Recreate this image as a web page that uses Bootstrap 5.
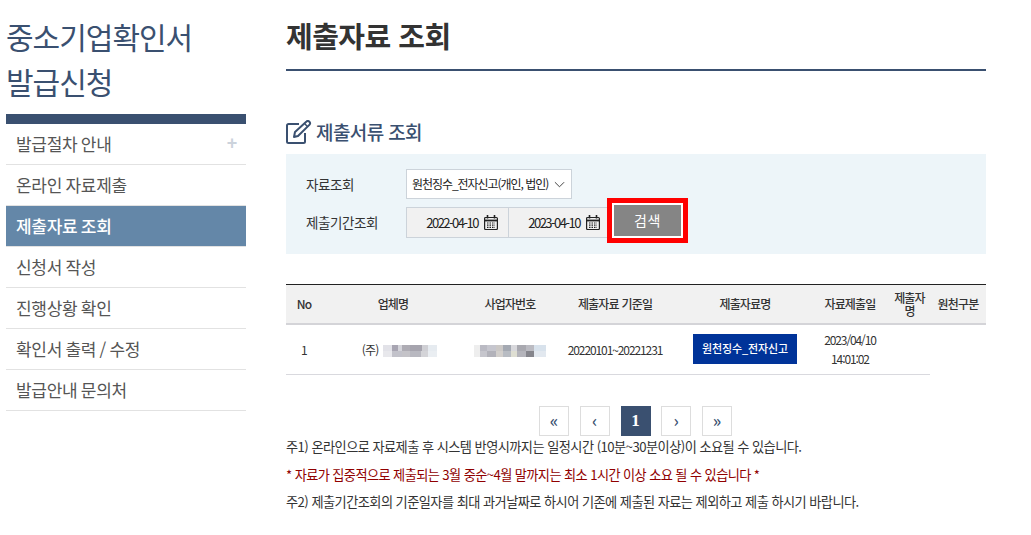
<!DOCTYPE html>
<html lang="ko">
<head>
<meta charset="utf-8">
<title>제출자료 조회</title>
<link rel="stylesheet" href="https://cdn.jsdelivr.net/npm/bootstrap@5.3.0/dist/css/bootstrap.min.css">
<style>
html,body{height:535px;overflow:hidden}
body{font-family:"Noto Sans CJK KR","Liberation Sans",sans-serif;color:#333;background:#fff;font-size:14px}
.page-wrap{padding-left:6px;width:986px;gap:40px}
.side-col{width:240px;flex:none}
.side-title{font-size:30px;line-height:45px;font-weight:400;color:#3a5070;letter-spacing:-1px;margin:14px 0 10px;padding:0}
.side-menu{border-top:10px solid #3a5070;border-radius:0}
.side-menu .list-group-item{height:41px;padding:0 10px;font-size:17px;line-height:39px;color:#555;border:0;border-bottom:1px solid #e2e2e2;border-radius:0;letter-spacing:-.3px;word-spacing:-1px;background:transparent;margin-top:0}
.side-menu .list-group-item.active{background:#6487a8;color:#fff;font-weight:500;border-bottom-color:#e2e2e2;margin-top:0}
.plus-mark{color:#ccd3dc;font-family:"Liberation Sans",sans-serif;font-size:18px;font-weight:700;margin-right:-1px}
.main-col{width:700px;flex:none}
.main-title{font-size:29px;font-weight:700;color:#333;line-height:40px;margin:15px 0 14px;letter-spacing:-.5px}
.main-rule{height:2px;background:#3a5070;margin-bottom:48px}
.sec-title{font-size:19px;font-weight:500;color:#3a5070;line-height:26px;letter-spacing:-.6px;margin:0 0 9px}
.filter-box{background:#edf5f9;height:100px;padding:15px 20px}
.filter-label{width:100px;flex:none;font-size:13.5px;letter-spacing:-.4px;color:#333}
.filter-select{width:166px;height:30px;border:1px solid #ccd3da;background-color:#fff;font-size:12px;letter-spacing:-1.05px;padding:0 18px 0 5px;line-height:28px;border-radius:0;color:#222;background-image:url("data:image/svg+xml,%3csvg xmlns='http://www.w3.org/2000/svg' viewBox='0 0 12 12'%3e%3cpath fill='none' stroke='%23333' stroke-width='1' d='M1 3.500 6 8.500 11 3.500'/%3e%3c/svg%3e");background-position:right 6px center;background-size:11px 11px}
.date-field{height:31px;width:103px;border:1px solid #ccd3da;background:#f1f1f1;font-size:13px;letter-spacing:-1.5px;color:#222;gap:6px;padding-right:10px;margin-right:-1px}
.date-field + .date-field{width:100px;padding-right:7px}
.search-frame{border:5px solid #f00;margin:-9px 0 -5px 0;padding:0;line-height:0;position:relative}
.search-btn{width:71px;height:35px;background:#858585;color:#fff;border:2px solid #fff;border-radius:0;font-size:14px;letter-spacing:.5px;padding:0;line-height:29px}
.search-btn:hover{background:#858585;color:#fff;border-color:#fff}
.data-table{table-layout:fixed;width:700px;margin:30px 0 0;font-size:12px;letter-spacing:-.8px;color:#333}
.data-table th{background:#f1f1f1;height:39px;padding:0;font-weight:500;text-align:center;vertical-align:middle;border-top:1px solid #222;border-bottom:2px solid #d4d4d8;line-height:13px}
.data-table th:nth-child(7){padding-left:5px;padding-right:0;white-space:normal}
.data-table td{height:51px;padding:0;text-align:center;vertical-align:middle;border-bottom:1px solid #d9d9de;line-height:19px}
.tight-num{letter-spacing:-1.1px}
.company-cell{padding-left:13px !important}
.doc-chip{display:inline-block;width:104px;height:30px;background:#003399;color:#fff;font-size:11px;font-weight:500;line-height:29px;letter-spacing:-.1px}
.blur-a,.blur-b{display:inline-block;height:12px;vertical-align:-2px;background-repeat:no-repeat;background-size:100% 50%;background-position:top,bottom}
.blur-a{width:54px;margin-left:2px;background-image:linear-gradient(90deg,#e2e2e8 0 16%,#a8a5b2 16% 28%,#d4d4da 28% 36%,#aeacb4 36% 50%,#a6a4ae 50% 72%,#cfcfd4 72% 84%,#e6ebf0 84% 100%),linear-gradient(90deg,#e8e8ec 0 16%,#c2c2ca 16% 36%,#c4c3c8 36% 50%,#b8b8c0 50% 70%,#d4d4d8 70% 84%,#eaeef2 84% 100%)}
.blur-b{width:72px;background-image:linear-gradient(90deg,#eeeeee 0 8%,#babac3 8% 18%,#c6c6ce 18% 30%,#cbc8c6 30% 40%,#a4a9b2 40% 52%,#d8d8dc 52% 60%,#a9a9b0 60% 72%,#bbbbc2 72% 84%,#d8e2ec 84% 100%),linear-gradient(90deg,#eeeeee 0 8%,#c6c6cd 8% 18%,#b2b2ba 18% 30%,#d2cfcc 30% 40%,#b8bcc3 40% 52%,#deded2 52% 60%,#b4b4bb 60% 72%,#85858c 72% 84%,#e2e8ef 84% 100%)}
.pager-row{gap:10.75px;margin-top:31px;padding:0;list-style:none;margin-bottom:0;padding-left:253px}
.pager-cell{width:30px;height:30px;border:1px solid #ddd;color:#3a5070;font-size:17px;font-weight:500;line-height:25px;text-align:center;background:#fff}
.pager-cell.current{background:#3a5070;border-color:#3a5070;color:#fff;font-weight:700;font-family:"Liberation Serif",serif;font-size:17px;line-height:27px}
.note-list{margin:-3px 0 0;font-size:13.2px;letter-spacing:-.55px;color:#333}
.note-list p{margin:0;height:27.5px;line-height:27.5px;white-space:nowrap}
.note-list .note-red{color:#900000;letter-spacing:-.6px}
</style>
</head>
<body>
<div class="d-flex page-wrap">
  <aside class="side-col">
    <h1 class="side-title">중소기업확인서<br>발급신청</h1>
    <div class="list-group side-menu">
      <a class="list-group-item d-flex justify-content-between" href="#"><span>발급절차 안내</span><span class="plus-mark">+</span></a>
      <a class="list-group-item" href="#">온라인 자료제출</a>
      <a class="list-group-item active" href="#">제출자료 조회</a>
      <a class="list-group-item" href="#">신청서 작성</a>
      <a class="list-group-item" href="#">진행상황 확인</a>
      <a class="list-group-item" href="#">확인서 출력 / 수정</a>
      <a class="list-group-item" href="#">발급안내 문의처</a>
    </div>
  </aside>
  <main class="main-col">
    <h2 class="main-title">제출자료 조회</h2>
    <div class="main-rule"></div>
    <h3 class="sec-title d-flex align-items-center gap-1">
      <svg width="26" height="24" viewBox="0 0 26 24" fill="none" stroke="#3a5070" stroke-width="2"><path d="M13 4H2.5a1.5 1.5 0 0 0-1.500 1.500V21.500A1.500 1.500 0 0 0 2.500 23h15a1.500 1.500 0 0 0 1.500-1.500V13"/><path d="M9 12 20.500 1.500a1.800 1.800 0 0 1 2.600 0l.5.5a1.800 1.800 0 0 1 0 2.600L12 16l-4 1z" stroke-linejoin="round"/><path d="m18.500 3.500 3.500 3.500" stroke-width="1.500"/></svg>
      <span>제출서류 조회</span>
    </h3>
    <div class="filter-box">
      <div class="d-flex align-items-center mb-2">
        <span class="filter-label">자료조회</span>
        <select class="form-select filter-select"><option>원천징수_전자신고(개인, 법인)</option></select>
      </div>
      <div class="d-flex align-items-center">
        <span class="filter-label">제출기간조회</span>
        <div class="date-field d-flex align-items-center justify-content-end">2022-04-10
          <svg width="14" height="15" viewBox="0 0 14 15" fill="none" stroke="#222" stroke-width="1.200"><rect x=".6" y="2.500" width="12.800" height="12" rx="1"/><path d="M.5 5.500h13" stroke-width="1.800"/><path d="M3.500 0v3.500M10.500 0v3.500" stroke-width="1.600"/><path d="M3 8h8M3 10.200h8M3 12.400h8" stroke-dasharray="1.500 1"/></svg>
        </div>
        <div class="date-field d-flex align-items-center justify-content-end">2023-04-10
          <svg width="14" height="15" viewBox="0 0 14 15" fill="none" stroke="#222" stroke-width="1.200"><rect x=".6" y="2.500" width="12.800" height="12" rx="1"/><path d="M.5 5.500h13" stroke-width="1.800"/><path d="M3.500 0v3.500M10.500 0v3.500" stroke-width="1.600"/><path d="M3 8h8M3 10.200h8M3 12.400h8" stroke-dasharray="1.500 1"/></svg>
        </div>
        <div class="search-frame"><button type="button" class="btn search-btn">검색</button></div>
      </div>
    </div>
    <table class="data-table">
      <colgroup><col style="width:36px"><col style="width:142px"><col style="width:92px"><col style="width:118px"><col style="width:142px"><col style="width:68px"><col style="width:46px"><col style="width:56px"></colgroup>
      <thead><tr><th>No</th><th>업체명</th><th>사업자번호</th><th>제출자료 기준일</th><th>제출자료명</th><th>자료제출일</th><th>제출자<br>명</th><th>원천구분</th></tr></thead>
      <tbody><tr><td>1</td><td class="company-cell">(주) <span class="blur-a"></span></td><td><span class="blur-b"></span></td><td class="tight-num">20220101~20221231</td><td><span class="doc-chip">원천징수_전자신고</span></td><td class="tight-num">2023/04/10<br>14:01:02</td><td></td></tr></tbody>
    </table>
    <ul class="d-flex pager-row">
      <li class="pager-cell">«</li><li class="pager-cell">‹</li><li class="pager-cell current">1</li><li class="pager-cell">›</li><li class="pager-cell">»</li>
    </ul>
    <div class="note-list">
      <p>주1) 온라인으로 자료제출 후 시스템 반영시까지는 일정시간 (10분~30분이상)이 소요될 수 있습니다.</p>
      <p class="note-red">* 자료가 집중적으로 제출되는 3월 중순~4월 말까지는 최소 1시간 이상 소요 될 수 있습니다 *</p>
      <p>주2) 제출기간조회의 기준일자를 최대 과거날짜로 하시어 기존에 제출된 자료는 제외하고 제출 하시기 바랍니다.</p>
    </div>
  </main>
</div>
<script src="https://cdn.jsdelivr.net/npm/bootstrap@5.3.0/dist/js/bootstrap.bundle.min.js"></script>
</body>
</html>
